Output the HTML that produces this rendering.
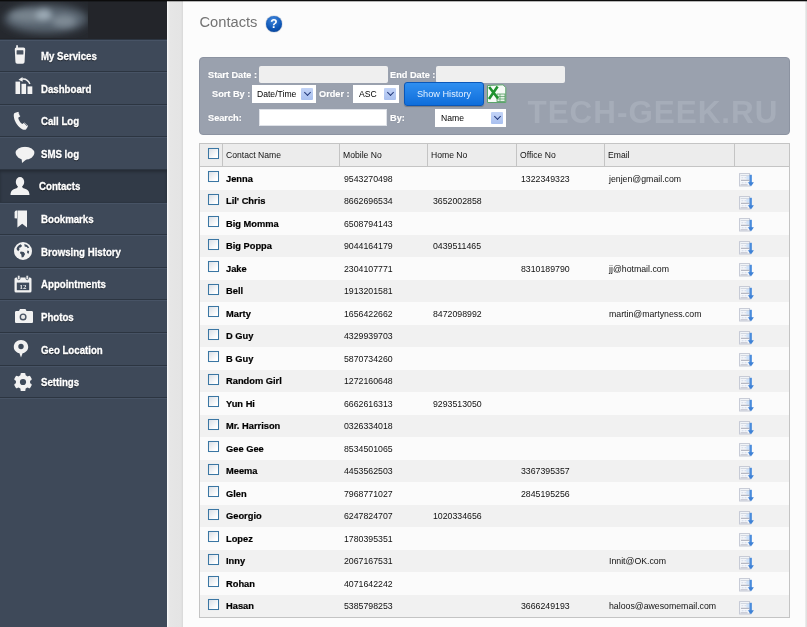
<!DOCTYPE html>
<html><head><meta charset="utf-8"><title>Contacts</title>
<style>
*{box-sizing:border-box;margin:0;padding:0}
html,body{width:807px;height:627px;overflow:hidden;background:#fcfcfc;font-family:"Liberation Sans",sans-serif;}
body{position:relative}
.abs{position:absolute}
#side{position:absolute;left:0;top:0;width:167px;height:627px;background:#3e4959;}
#logo{position:absolute;left:0;top:0;width:167px;height:39px;background:#23252a;}
#strip{position:absolute;left:167px;top:0;width:16px;height:627px;background:linear-gradient(to right,#ffffff 0,#f0f0f0 1px,#e6e6e6 3px,#e4e4e4 14px,#d8d8d8 16px);}
#topline{position:absolute;left:0;top:0;width:807px;height:2px;background:linear-gradient(#0c0c0c 0,#0c0c0c 1px,rgba(0,0,0,.28) 1px,rgba(0,0,0,.28) 2px);z-index:5}
.mi{position:absolute;left:0;width:167px;border-top:1px solid #2c3541;box-shadow:inset 0 1px 0 #475365;color:#fff;font-weight:bold;font-size:10.5px;}
.mi span{position:absolute;left:41px;top:calc(50% + .5px);transform:translateY(-50%) scaleX(.92);transform-origin:left center;white-space:nowrap;text-shadow:0 1px 1px rgba(0,0,0,.6);-webkit-text-stroke:.3px #fff}
.mi svg{position:absolute;top:50%;transform:translate(-50%,-50%)}
.mi.act{background:#313a47;box-shadow:inset 0 2px 3px rgba(0,0,0,.25)}
.mi.act span{left:39px;top:calc(50% - .5px)}
h1{position:absolute;left:199.5px;top:13.5px;font-size:14.7px;font-weight:normal;color:#737373;letter-spacing:0}
#help{position:absolute;left:266px;top:16px;width:16px;height:16px;border-radius:50%;background:radial-gradient(circle at 45% 25%,#3f86dc,#0d55b4 60%,#083b88);color:#fff;font-weight:bold;font-size:12px;text-align:center;line-height:16px;box-shadow:0 0 1px #052a66}
#panel{position:absolute;left:199px;top:57px;width:591px;height:78px;background:#9aa1ae;border-radius:4px;border:1px solid #8c93a1}
.lbl{position:absolute;color:#fff;font-weight:bold;font-size:9.2px;-webkit-text-stroke:.2px #fff;white-space:nowrap;text-shadow:0 0 1px rgba(90,98,112,.5)}
.inp{position:absolute;background:#efefef;border-radius:2px}
.inpw{position:absolute;background:#fff;border:1px solid #dfe2e8}
.sel{position:absolute;background:#fff;font-size:8.6px;color:#000;line-height:18px;padding-left:5px;white-space:nowrap}
.sel i{position:absolute;right:3px;top:3px;width:12px;height:12px;background:linear-gradient(#c3d4f7,#a9c0ef);border-radius:1px}
.sel i:after{content:"";position:absolute;left:3.5px;top:2px;width:5px;height:5px;border-right:1.8px solid #24397a;border-bottom:1.8px solid #24397a;transform:rotate(45deg);transform-origin:center;box-sizing:border-box}
#btn{position:absolute;left:404px;top:82px;width:80px;height:24px;border-radius:3px;background:linear-gradient(#2f8ff0,#0f6edb);border:1px solid #0a57b8;color:#e2f0ff;font-size:9.2px;text-align:center;line-height:22px;box-shadow:0 1px 1px rgba(0,0,0,.25)}
#wm{position:absolute;left:527.5px;top:93.5px;font-size:31.4px;font-weight:bold;color:#a6adb9;white-space:nowrap;line-height:38px;letter-spacing:1px}
#tbl{position:absolute;left:199px;top:143px;width:591px;height:475px;border:1px solid #c4c4c4;background:#fbfbfb}
#thead{position:absolute;left:0;top:0;width:589px;height:23px;background:#ececec;border-bottom:1px solid #c4c4c4}
.th{position:absolute;top:0;height:22px;line-height:22px;font-size:8.6px;color:#111;border-left:1px solid #c4c4c4;padding-left:3px;white-space:nowrap}
.tr{position:absolute;left:0;width:589px;}
.tr.alt{background:#f1f1f1}
.td{position:absolute;font-size:8.75px;color:#111;white-space:nowrap;top:calc(50% + .4px);transform:translateY(-50%)}
.td.b{font-weight:bold;font-size:9.3px;color:#000;-webkit-text-stroke:.2px #000}
.cb{position:absolute;left:8px;width:11px;height:11px;border:1px solid #3a76a3;background:linear-gradient(135deg,#d9dfe6,#ffffff 80%);box-shadow:0 0 .5px #3a76a3}
.ric{position:absolute;left:539px;top:calc(50% + 1.5px);transform:translateY(-50%);line-height:0}
#root{position:absolute;left:0;top:0;width:807px;height:627px;will-change:transform}
</style></head><body><div id="root">
<div id="side"></div>
<div id="logo"><svg width="167" height="39" style="position:absolute;left:0;top:0"><defs><filter id="bl" x="-30%" y="-80%" width="160%" height="260%"><feGaussianBlur stdDeviation="4.5"/></filter><filter id="bl2" x="-50%" y="-80%" width="200%" height="260%"><feGaussianBlur stdDeviation="3"/></filter><clipPath id="lc"><rect x="0" y="1" width="88" height="37"/></clipPath></defs><g clip-path="url(#lc)"><rect x="0" y="1" width="88" height="37" fill="#25282e"/><g filter="url(#bl)"><ellipse cx="46" cy="19" rx="42" ry="14" fill="#5a6672"/></g><g filter="url(#bl2)"><ellipse cx="30" cy="16" rx="20" ry="6" fill="#78848e"/><ellipse cx="44" cy="15" rx="8" ry="6" fill="#9dabb6"/><ellipse cx="64" cy="21" rx="12" ry="6" fill="#7f8b95"/></g></g></svg></div>
<div id="strip"></div>

<div class="mi" style="top:39px;height:32px"><span>My Services</span><svg style="left:20px;margin-top:-1px" width="12" height="20" viewBox="0 0 12 20"><path d="M2.2 0.3h1.7v3.4H2.2z" fill="#f2f2f2"/><path d="M2.6 2.6 H9.4 C10.6 2.6 11.3 3.4 11.2 4.6 L10.6 16.6 C10.5 18 9.8 18.8 8.6 18.8 H3.4 C2.2 18.8 1.5 18 1.4 16.6 L0.8 4.6 C0.7 3.4 1.4 2.6 2.6 2.6z" fill="#f2f2f2"/><rect x="2.6" y="5.2" width="6.8" height="4.4" rx="0.6" fill="#4a5462"/></svg></div>
<div class="mi" style="top:71px;height:33px"><span>Dashboard</span><svg style="left:23.5px;margin-top:-2px" width="19" height="18" viewBox="0 0 19 18"><rect x="1" y="4.6" width="4.6" height="12.4" fill="#f2f2f2"/><rect x="7" y="6.8" width="4.6" height="10.2" fill="#f2f2f2"/><rect x="13" y="9.4" width="4.8" height="7.6" fill="#f2f2f2"/><path d="M6.2 2.4 C10 1.2 13.6 3 15.4 7" stroke="#f2f2f2" stroke-width="1.5" fill="none"/><path d="M4 2.8 L8 0 L8.2 4.8z" fill="#f2f2f2"/></svg></div>
<div class="mi" style="top:104px;height:32px"><span>Call Log</span><svg style="left:21px;margin-top:0px" width="16" height="19" viewBox="0 0 16 19"><path d="M1.6 1.6 L5.4 0.2 L7.4 4.8 L5.2 6.2 C5.6 8.6 7.2 11.2 9.4 12.6 L11.4 11 L15.2 14.6 L13 18 C11.6 18.8 9.6 18.2 8 17 C4 14 1.2 9.4 0.8 4.8 C0.7 3.4 0.8 2.2 1.6 1.6z" fill="#f2f2f2"/><path d="M5.9 1.4 L7.6 5.2 M11.2 11.6 L14.4 14.8" stroke="#3f4b5b" stroke-width=".7"/></svg></div>
<div class="mi" style="top:136px;height:33px"><span>SMS log</span><svg style="left:24.5px;margin-top:2px" width="20" height="17" viewBox="0 0 20 17"><ellipse cx="10" cy="6.6" rx="9.4" ry="6.4" fill="#f2f2f2"/><path d="M6.6 11 L7 16.4 L12.4 12z" fill="#f2f2f2"/></svg></div>
<div class="mi act" style="top:169px;height:33px"><span>Contacts</span><svg style="left:20px;margin-top:0px" width="20" height="18" viewBox="0 0 20 18"><ellipse cx="10" cy="5" rx="4.2" ry="5" fill="#f2f2f2"/><path d="M0.5 18 C0.5 13.5 3 12.2 7.2 11 L8 9 H12 L12.8 11 C17 12.2 19.5 13.5 19.5 18z" fill="#f2f2f2"/></svg></div>
<div class="mi" style="top:202px;height:32px"><span>Bookmarks</span><svg style="left:21px;margin-top:0px" width="14" height="18" viewBox="0 0 14 18"><path d="M0.6 2.6 C0.6 1 1.6 0.4 3 0.4 V8.6 L0.6 8.2z" fill="#f2f2f2"/><path d="M3.4 0.4 H13 V17.4 L8.2 13.8 L3.4 17.4z" fill="#f2f2f2"/></svg></div>
<div class="mi" style="top:234px;height:33px"><span>Browsing History</span><svg style="left:23px;margin-top:0px" width="19" height="19" viewBox="0 0 19 19"><circle cx="9.5" cy="9.5" r="9" fill="#f2f2f2"/><path d="M3 7.5 C3.6 5 5.2 3.4 7.2 2.8 L8.6 4.4 L7 6 L5.6 6.2 L6 8.2 L4.6 9.8z" fill="#3f4b5b"/><path d="M10.8 2.6 L13.6 3.4 L15.8 6 L14.2 6.8 L13.4 5.4 L11.2 5z" fill="#3f4b5b"/><path d="M7.2 10 L10.2 10.4 L11.6 12.6 L10 15.6 L8.2 16 L7.8 13 L6.4 11.6z" fill="#3f4b5b"/><path d="M13.8 9 L15.6 9.6 L15.2 12.2 L13.6 11.4z" fill="#3f4b5b"/></svg></div>
<div class="mi" style="top:267px;height:32px"><span>Appointments</span><svg style="left:23px;margin-top:0px" width="18" height="18" viewBox="0 0 18 18"><rect x="0.5" y="2.5" width="17" height="15" rx="1.6" fill="#f2f2f2"/><rect x="3.6" y="0.3" width="2.4" height="4.4" rx="1" fill="#f2f2f2" stroke="#3f4b5b" stroke-width="0.8"/><rect x="12" y="0.3" width="2.4" height="4.4" rx="1" fill="#f2f2f2" stroke="#3f4b5b" stroke-width="0.8"/><rect x="2.8" y="7.6" width="12.4" height="7.6" fill="#3f4b5b"/><text x="9" y="14" font-family="Liberation Serif" font-size="6.8" font-weight="bold" fill="#f2f2f2" text-anchor="middle">12</text></svg></div>
<div class="mi" style="top:299px;height:33px"><span>Photos</span><svg style="left:23.5px;margin-top:0px" width="19" height="15" viewBox="0 0 19 15"><path d="M5.5 0.5 H11 L12 2.5 H17 C18 2.5 18.5 3 18.5 4 V13 C18.5 14 18 14.5 17 14.5 H2 C1 14.5 0.5 14 0.5 13 V4 C0.5 3 1 2.5 2 2.5 H4.5z" fill="#f2f2f2"/><circle cx="8.6" cy="8.4" r="3.5" fill="#4a5565"/><circle cx="8.6" cy="8.4" r="2.1" fill="#e9e9e9"/></svg></div>
<div class="mi" style="top:332px;height:33px"><span>Geo Location</span><svg style="left:21px;margin-top:0px" width="16" height="19" viewBox="0 0 16 19"><path d="M8 0.6 C3.8 0.6 0.8 3.6 0.8 7.4 C0.8 10.6 3.2 13 6.4 13.8 L8 18 L9.6 13.8 C12.8 13 15.2 10.6 15.2 7.4 C15.2 3.6 12.2 0.6 8 0.6z" fill="#f2f2f2"/><circle cx="8" cy="7" r="2.7" fill="#3f4b5b"/></svg></div>
<div class="mi" style="top:365px;height:32px"><span>Settings</span><svg style="left:23px;margin-top:0px" width="19" height="19" viewBox="0 0 19 19"><g fill="#f2f2f2"><circle cx="9.5" cy="9.5" r="7.2"/><rect x="7" y="0.4" width="5" height="18.2" rx="1.2"/><rect x="7" y="0.4" width="5" height="18.2" rx="1.2" transform="rotate(60 9.5 9.5)"/><rect x="7" y="0.4" width="5" height="18.2" rx="1.2" transform="rotate(120 9.5 9.5)"/></g><circle cx="9.5" cy="9.5" r="3.1" fill="#3f4b5b"/></svg></div>
<div class="mi" style="top:397px;height:230px"></div>
<div id="topline"></div>
<h1>Contacts</h1>
<div id="help">?</div>
<div id="panel"></div>
<div id="wm">TECH-GEEK.RU</div>
<div class="lbl" style="left:208px;top:70px">Start Date :</div>
<div class="inp" style="left:259px;top:66px;width:129px;height:17px"></div>
<div class="lbl" style="left:390px;top:70px">End Date :</div>
<div class="inp" style="left:436px;top:66px;width:129px;height:17px"></div>
<div class="lbl" style="left:212px;top:89px">Sort By :</div>
<div class="sel" style="left:252px;top:85px;width:64px;height:18px">Date/Time<i></i></div>
<div class="lbl" style="left:319px;top:89px">Order :</div>
<div class="sel" style="left:353px;top:85px;width:46px;height:18px;padding-left:6px">ASC<i></i></div>
<div id="btn">Show History</div>
<svg class="abs" style="left:486px;top:84px" width="21" height="20" viewBox="0 0 21 20"><path d="M1.5 1.5 L17 0.8 L19.8 3.5 V18.5 H1.5z" fill="#f6fbf6" stroke="#5aa46a" stroke-width="1"/><rect x="11" y="10" width="8" height="7.5" fill="#e8f4e8" stroke="#4f9a5e" stroke-width=".8"/><path d="M11 12.5h8M11 15h8M14 10v7.5" stroke="#4f9a5e" stroke-width=".7"/><path d="M3.2 3 L12 14.5 M11.6 2.6 L3 15" stroke="#1f922f" stroke-width="2.6"/></svg>
<div class="lbl" style="left:208px;top:113px">Search:</div>
<div class="inpw" style="left:259px;top:109px;width:128px;height:17px"></div>
<div class="lbl" style="left:390px;top:113px">By:</div>
<div class="sel" style="left:435px;top:109px;width:71px;height:18px;padding-left:6px">Name<i></i></div>
<div id="tbl"><div id="thead">
<div class="cb" style="top:4px"></div>
<div class="th" style="left:22px;width:117px">Contact Name</div>
<div class="th" style="left:139px;width:88px">Mobile No</div>
<div class="th" style="left:227px;width:89px">Home No</div>
<div class="th" style="left:316px;width:88px">Office No</div>
<div class="th" style="left:404px;width:130px">Email</div>
<div class="th" style="left:534px;width:55px"></div>
</div>

<div class="tr" style="top:23px;height:23px"><div class="cb" style="top:4px"></div><div class="td b" style="left:26px">Jenna</div><div class="td" style="left:144px">9543270498</div><div class="td" style="left:233px"></div><div class="td" style="left:321px">1322349323</div><div class="td" style="left:409px">jenjen@gmail.com</div><div class="ric"><svg width="17" height="14" viewBox="0 0 17 14"><rect x="0.6" y="0.6" width="10" height="12.4" fill="#f7f9fc" stroke="#c3c7d3" stroke-width="1"/><rect x="7.4" y="3" width="3" height="3.6" fill="#cfe2f8"/><path d="M1.6 2.6h8.4" stroke="#cdd3de" stroke-width="1"/><path d="M2 7.3h8" stroke="#a9adba" stroke-width="1.1"/><path d="M2.4 4.8h5M2.6 9.8h6.4" stroke="#c9d3e2" stroke-width="0.9" stroke-dasharray="2 1"/><path d="M1.6 11.8h7" stroke="#b9bdc9" stroke-width="1"/><path d="M11.7 1.8 V10" stroke="#4a8cdc" stroke-width="2.3"/><path d="M8.9 9.2 H14.9 L11.9 13.4z" fill="#3f82d6"/></svg></div></div>
<div class="tr alt" style="top:46px;height:22px"><div class="cb" style="top:4px"></div><div class="td b" style="left:26px">Lil' Chris</div><div class="td" style="left:144px">8662696534</div><div class="td" style="left:233px">3652002858</div><div class="td" style="left:321px"></div><div class="td" style="left:409px"></div><div class="ric"><svg width="17" height="14" viewBox="0 0 17 14"><rect x="0.6" y="0.6" width="10" height="12.4" fill="#f7f9fc" stroke="#c3c7d3" stroke-width="1"/><rect x="7.4" y="3" width="3" height="3.6" fill="#cfe2f8"/><path d="M1.6 2.6h8.4" stroke="#cdd3de" stroke-width="1"/><path d="M2 7.3h8" stroke="#a9adba" stroke-width="1.1"/><path d="M2.4 4.8h5M2.6 9.8h6.4" stroke="#c9d3e2" stroke-width="0.9" stroke-dasharray="2 1"/><path d="M1.6 11.8h7" stroke="#b9bdc9" stroke-width="1"/><path d="M11.7 1.8 V10" stroke="#4a8cdc" stroke-width="2.3"/><path d="M8.9 9.2 H14.9 L11.9 13.4z" fill="#3f82d6"/></svg></div></div>
<div class="tr" style="top:68px;height:23px"><div class="cb" style="top:4px"></div><div class="td b" style="left:26px">Big Momma</div><div class="td" style="left:144px">6508794143</div><div class="td" style="left:233px"></div><div class="td" style="left:321px"></div><div class="td" style="left:409px"></div><div class="ric"><svg width="17" height="14" viewBox="0 0 17 14"><rect x="0.6" y="0.6" width="10" height="12.4" fill="#f7f9fc" stroke="#c3c7d3" stroke-width="1"/><rect x="7.4" y="3" width="3" height="3.6" fill="#cfe2f8"/><path d="M1.6 2.6h8.4" stroke="#cdd3de" stroke-width="1"/><path d="M2 7.3h8" stroke="#a9adba" stroke-width="1.1"/><path d="M2.4 4.8h5M2.6 9.8h6.4" stroke="#c9d3e2" stroke-width="0.9" stroke-dasharray="2 1"/><path d="M1.6 11.8h7" stroke="#b9bdc9" stroke-width="1"/><path d="M11.7 1.8 V10" stroke="#4a8cdc" stroke-width="2.3"/><path d="M8.9 9.2 H14.9 L11.9 13.4z" fill="#3f82d6"/></svg></div></div>
<div class="tr alt" style="top:91px;height:22px"><div class="cb" style="top:4px"></div><div class="td b" style="left:26px">Big Poppa</div><div class="td" style="left:144px">9044164179</div><div class="td" style="left:233px">0439511465</div><div class="td" style="left:321px"></div><div class="td" style="left:409px"></div><div class="ric"><svg width="17" height="14" viewBox="0 0 17 14"><rect x="0.6" y="0.6" width="10" height="12.4" fill="#f7f9fc" stroke="#c3c7d3" stroke-width="1"/><rect x="7.4" y="3" width="3" height="3.6" fill="#cfe2f8"/><path d="M1.6 2.6h8.4" stroke="#cdd3de" stroke-width="1"/><path d="M2 7.3h8" stroke="#a9adba" stroke-width="1.1"/><path d="M2.4 4.8h5M2.6 9.8h6.4" stroke="#c9d3e2" stroke-width="0.9" stroke-dasharray="2 1"/><path d="M1.6 11.8h7" stroke="#b9bdc9" stroke-width="1"/><path d="M11.7 1.8 V10" stroke="#4a8cdc" stroke-width="2.3"/><path d="M8.9 9.2 H14.9 L11.9 13.4z" fill="#3f82d6"/></svg></div></div>
<div class="tr" style="top:113px;height:23px"><div class="cb" style="top:4px"></div><div class="td b" style="left:26px">Jake</div><div class="td" style="left:144px">2304107771</div><div class="td" style="left:233px"></div><div class="td" style="left:321px">8310189790</div><div class="td" style="left:409px">jj@hotmail.com</div><div class="ric"><svg width="17" height="14" viewBox="0 0 17 14"><rect x="0.6" y="0.6" width="10" height="12.4" fill="#f7f9fc" stroke="#c3c7d3" stroke-width="1"/><rect x="7.4" y="3" width="3" height="3.6" fill="#cfe2f8"/><path d="M1.6 2.6h8.4" stroke="#cdd3de" stroke-width="1"/><path d="M2 7.3h8" stroke="#a9adba" stroke-width="1.1"/><path d="M2.4 4.8h5M2.6 9.8h6.4" stroke="#c9d3e2" stroke-width="0.9" stroke-dasharray="2 1"/><path d="M1.6 11.8h7" stroke="#b9bdc9" stroke-width="1"/><path d="M11.7 1.8 V10" stroke="#4a8cdc" stroke-width="2.3"/><path d="M8.9 9.2 H14.9 L11.9 13.4z" fill="#3f82d6"/></svg></div></div>
<div class="tr alt" style="top:136px;height:22px"><div class="cb" style="top:4px"></div><div class="td b" style="left:26px">Bell</div><div class="td" style="left:144px">1913201581</div><div class="td" style="left:233px"></div><div class="td" style="left:321px"></div><div class="td" style="left:409px"></div><div class="ric"><svg width="17" height="14" viewBox="0 0 17 14"><rect x="0.6" y="0.6" width="10" height="12.4" fill="#f7f9fc" stroke="#c3c7d3" stroke-width="1"/><rect x="7.4" y="3" width="3" height="3.6" fill="#cfe2f8"/><path d="M1.6 2.6h8.4" stroke="#cdd3de" stroke-width="1"/><path d="M2 7.3h8" stroke="#a9adba" stroke-width="1.1"/><path d="M2.4 4.8h5M2.6 9.8h6.4" stroke="#c9d3e2" stroke-width="0.9" stroke-dasharray="2 1"/><path d="M1.6 11.8h7" stroke="#b9bdc9" stroke-width="1"/><path d="M11.7 1.8 V10" stroke="#4a8cdc" stroke-width="2.3"/><path d="M8.9 9.2 H14.9 L11.9 13.4z" fill="#3f82d6"/></svg></div></div>
<div class="tr" style="top:158px;height:23px"><div class="cb" style="top:4px"></div><div class="td b" style="left:26px">Marty</div><div class="td" style="left:144px">1656422662</div><div class="td" style="left:233px">8472098992</div><div class="td" style="left:321px"></div><div class="td" style="left:409px">martin@martyness.com</div><div class="ric"><svg width="17" height="14" viewBox="0 0 17 14"><rect x="0.6" y="0.6" width="10" height="12.4" fill="#f7f9fc" stroke="#c3c7d3" stroke-width="1"/><rect x="7.4" y="3" width="3" height="3.6" fill="#cfe2f8"/><path d="M1.6 2.6h8.4" stroke="#cdd3de" stroke-width="1"/><path d="M2 7.3h8" stroke="#a9adba" stroke-width="1.1"/><path d="M2.4 4.8h5M2.6 9.8h6.4" stroke="#c9d3e2" stroke-width="0.9" stroke-dasharray="2 1"/><path d="M1.6 11.8h7" stroke="#b9bdc9" stroke-width="1"/><path d="M11.7 1.8 V10" stroke="#4a8cdc" stroke-width="2.3"/><path d="M8.9 9.2 H14.9 L11.9 13.4z" fill="#3f82d6"/></svg></div></div>
<div class="tr alt" style="top:181px;height:22px"><div class="cb" style="top:4px"></div><div class="td b" style="left:26px">D Guy</div><div class="td" style="left:144px">4329939703</div><div class="td" style="left:233px"></div><div class="td" style="left:321px"></div><div class="td" style="left:409px"></div><div class="ric"><svg width="17" height="14" viewBox="0 0 17 14"><rect x="0.6" y="0.6" width="10" height="12.4" fill="#f7f9fc" stroke="#c3c7d3" stroke-width="1"/><rect x="7.4" y="3" width="3" height="3.6" fill="#cfe2f8"/><path d="M1.6 2.6h8.4" stroke="#cdd3de" stroke-width="1"/><path d="M2 7.3h8" stroke="#a9adba" stroke-width="1.1"/><path d="M2.4 4.8h5M2.6 9.8h6.4" stroke="#c9d3e2" stroke-width="0.9" stroke-dasharray="2 1"/><path d="M1.6 11.8h7" stroke="#b9bdc9" stroke-width="1"/><path d="M11.7 1.8 V10" stroke="#4a8cdc" stroke-width="2.3"/><path d="M8.9 9.2 H14.9 L11.9 13.4z" fill="#3f82d6"/></svg></div></div>
<div class="tr" style="top:203px;height:23px"><div class="cb" style="top:4px"></div><div class="td b" style="left:26px">B Guy</div><div class="td" style="left:144px">5870734260</div><div class="td" style="left:233px"></div><div class="td" style="left:321px"></div><div class="td" style="left:409px"></div><div class="ric"><svg width="17" height="14" viewBox="0 0 17 14"><rect x="0.6" y="0.6" width="10" height="12.4" fill="#f7f9fc" stroke="#c3c7d3" stroke-width="1"/><rect x="7.4" y="3" width="3" height="3.6" fill="#cfe2f8"/><path d="M1.6 2.6h8.4" stroke="#cdd3de" stroke-width="1"/><path d="M2 7.3h8" stroke="#a9adba" stroke-width="1.1"/><path d="M2.4 4.8h5M2.6 9.8h6.4" stroke="#c9d3e2" stroke-width="0.9" stroke-dasharray="2 1"/><path d="M1.6 11.8h7" stroke="#b9bdc9" stroke-width="1"/><path d="M11.7 1.8 V10" stroke="#4a8cdc" stroke-width="2.3"/><path d="M8.9 9.2 H14.9 L11.9 13.4z" fill="#3f82d6"/></svg></div></div>
<div class="tr alt" style="top:226px;height:22px"><div class="cb" style="top:4px"></div><div class="td b" style="left:26px">Random Girl</div><div class="td" style="left:144px">1272160648</div><div class="td" style="left:233px"></div><div class="td" style="left:321px"></div><div class="td" style="left:409px"></div><div class="ric"><svg width="17" height="14" viewBox="0 0 17 14"><rect x="0.6" y="0.6" width="10" height="12.4" fill="#f7f9fc" stroke="#c3c7d3" stroke-width="1"/><rect x="7.4" y="3" width="3" height="3.6" fill="#cfe2f8"/><path d="M1.6 2.6h8.4" stroke="#cdd3de" stroke-width="1"/><path d="M2 7.3h8" stroke="#a9adba" stroke-width="1.1"/><path d="M2.4 4.8h5M2.6 9.8h6.4" stroke="#c9d3e2" stroke-width="0.9" stroke-dasharray="2 1"/><path d="M1.6 11.8h7" stroke="#b9bdc9" stroke-width="1"/><path d="M11.7 1.8 V10" stroke="#4a8cdc" stroke-width="2.3"/><path d="M8.9 9.2 H14.9 L11.9 13.4z" fill="#3f82d6"/></svg></div></div>
<div class="tr" style="top:248px;height:23px"><div class="cb" style="top:4px"></div><div class="td b" style="left:26px">Yun Hi</div><div class="td" style="left:144px">6662616313</div><div class="td" style="left:233px">9293513050</div><div class="td" style="left:321px"></div><div class="td" style="left:409px"></div><div class="ric"><svg width="17" height="14" viewBox="0 0 17 14"><rect x="0.6" y="0.6" width="10" height="12.4" fill="#f7f9fc" stroke="#c3c7d3" stroke-width="1"/><rect x="7.4" y="3" width="3" height="3.6" fill="#cfe2f8"/><path d="M1.6 2.6h8.4" stroke="#cdd3de" stroke-width="1"/><path d="M2 7.3h8" stroke="#a9adba" stroke-width="1.1"/><path d="M2.4 4.8h5M2.6 9.8h6.4" stroke="#c9d3e2" stroke-width="0.9" stroke-dasharray="2 1"/><path d="M1.6 11.8h7" stroke="#b9bdc9" stroke-width="1"/><path d="M11.7 1.8 V10" stroke="#4a8cdc" stroke-width="2.3"/><path d="M8.9 9.2 H14.9 L11.9 13.4z" fill="#3f82d6"/></svg></div></div>
<div class="tr alt" style="top:271px;height:22px"><div class="cb" style="top:4px"></div><div class="td b" style="left:26px">Mr. Harrison</div><div class="td" style="left:144px">0326334018</div><div class="td" style="left:233px"></div><div class="td" style="left:321px"></div><div class="td" style="left:409px"></div><div class="ric"><svg width="17" height="14" viewBox="0 0 17 14"><rect x="0.6" y="0.6" width="10" height="12.4" fill="#f7f9fc" stroke="#c3c7d3" stroke-width="1"/><rect x="7.4" y="3" width="3" height="3.6" fill="#cfe2f8"/><path d="M1.6 2.6h8.4" stroke="#cdd3de" stroke-width="1"/><path d="M2 7.3h8" stroke="#a9adba" stroke-width="1.1"/><path d="M2.4 4.8h5M2.6 9.8h6.4" stroke="#c9d3e2" stroke-width="0.9" stroke-dasharray="2 1"/><path d="M1.6 11.8h7" stroke="#b9bdc9" stroke-width="1"/><path d="M11.7 1.8 V10" stroke="#4a8cdc" stroke-width="2.3"/><path d="M8.9 9.2 H14.9 L11.9 13.4z" fill="#3f82d6"/></svg></div></div>
<div class="tr" style="top:293px;height:23px"><div class="cb" style="top:4px"></div><div class="td b" style="left:26px">Gee Gee</div><div class="td" style="left:144px">8534501065</div><div class="td" style="left:233px"></div><div class="td" style="left:321px"></div><div class="td" style="left:409px"></div><div class="ric"><svg width="17" height="14" viewBox="0 0 17 14"><rect x="0.6" y="0.6" width="10" height="12.4" fill="#f7f9fc" stroke="#c3c7d3" stroke-width="1"/><rect x="7.4" y="3" width="3" height="3.6" fill="#cfe2f8"/><path d="M1.6 2.6h8.4" stroke="#cdd3de" stroke-width="1"/><path d="M2 7.3h8" stroke="#a9adba" stroke-width="1.1"/><path d="M2.4 4.8h5M2.6 9.8h6.4" stroke="#c9d3e2" stroke-width="0.9" stroke-dasharray="2 1"/><path d="M1.6 11.8h7" stroke="#b9bdc9" stroke-width="1"/><path d="M11.7 1.8 V10" stroke="#4a8cdc" stroke-width="2.3"/><path d="M8.9 9.2 H14.9 L11.9 13.4z" fill="#3f82d6"/></svg></div></div>
<div class="tr alt" style="top:316px;height:22px"><div class="cb" style="top:4px"></div><div class="td b" style="left:26px">Meema</div><div class="td" style="left:144px">4453562503</div><div class="td" style="left:233px"></div><div class="td" style="left:321px">3367395357</div><div class="td" style="left:409px"></div><div class="ric"><svg width="17" height="14" viewBox="0 0 17 14"><rect x="0.6" y="0.6" width="10" height="12.4" fill="#f7f9fc" stroke="#c3c7d3" stroke-width="1"/><rect x="7.4" y="3" width="3" height="3.6" fill="#cfe2f8"/><path d="M1.6 2.6h8.4" stroke="#cdd3de" stroke-width="1"/><path d="M2 7.3h8" stroke="#a9adba" stroke-width="1.1"/><path d="M2.4 4.8h5M2.6 9.8h6.4" stroke="#c9d3e2" stroke-width="0.9" stroke-dasharray="2 1"/><path d="M1.6 11.8h7" stroke="#b9bdc9" stroke-width="1"/><path d="M11.7 1.8 V10" stroke="#4a8cdc" stroke-width="2.3"/><path d="M8.9 9.2 H14.9 L11.9 13.4z" fill="#3f82d6"/></svg></div></div>
<div class="tr" style="top:338px;height:23px"><div class="cb" style="top:4px"></div><div class="td b" style="left:26px">Glen</div><div class="td" style="left:144px">7968771027</div><div class="td" style="left:233px"></div><div class="td" style="left:321px">2845195256</div><div class="td" style="left:409px"></div><div class="ric"><svg width="17" height="14" viewBox="0 0 17 14"><rect x="0.6" y="0.6" width="10" height="12.4" fill="#f7f9fc" stroke="#c3c7d3" stroke-width="1"/><rect x="7.4" y="3" width="3" height="3.6" fill="#cfe2f8"/><path d="M1.6 2.6h8.4" stroke="#cdd3de" stroke-width="1"/><path d="M2 7.3h8" stroke="#a9adba" stroke-width="1.1"/><path d="M2.4 4.8h5M2.6 9.8h6.4" stroke="#c9d3e2" stroke-width="0.9" stroke-dasharray="2 1"/><path d="M1.6 11.8h7" stroke="#b9bdc9" stroke-width="1"/><path d="M11.7 1.8 V10" stroke="#4a8cdc" stroke-width="2.3"/><path d="M8.9 9.2 H14.9 L11.9 13.4z" fill="#3f82d6"/></svg></div></div>
<div class="tr alt" style="top:361px;height:22px"><div class="cb" style="top:4px"></div><div class="td b" style="left:26px">Georgio</div><div class="td" style="left:144px">6247824707</div><div class="td" style="left:233px">1020334656</div><div class="td" style="left:321px"></div><div class="td" style="left:409px"></div><div class="ric"><svg width="17" height="14" viewBox="0 0 17 14"><rect x="0.6" y="0.6" width="10" height="12.4" fill="#f7f9fc" stroke="#c3c7d3" stroke-width="1"/><rect x="7.4" y="3" width="3" height="3.6" fill="#cfe2f8"/><path d="M1.6 2.6h8.4" stroke="#cdd3de" stroke-width="1"/><path d="M2 7.3h8" stroke="#a9adba" stroke-width="1.1"/><path d="M2.4 4.8h5M2.6 9.8h6.4" stroke="#c9d3e2" stroke-width="0.9" stroke-dasharray="2 1"/><path d="M1.6 11.8h7" stroke="#b9bdc9" stroke-width="1"/><path d="M11.7 1.8 V10" stroke="#4a8cdc" stroke-width="2.3"/><path d="M8.9 9.2 H14.9 L11.9 13.4z" fill="#3f82d6"/></svg></div></div>
<div class="tr" style="top:383px;height:23px"><div class="cb" style="top:4px"></div><div class="td b" style="left:26px">Lopez</div><div class="td" style="left:144px">1780395351</div><div class="td" style="left:233px"></div><div class="td" style="left:321px"></div><div class="td" style="left:409px"></div><div class="ric"><svg width="17" height="14" viewBox="0 0 17 14"><rect x="0.6" y="0.6" width="10" height="12.4" fill="#f7f9fc" stroke="#c3c7d3" stroke-width="1"/><rect x="7.4" y="3" width="3" height="3.6" fill="#cfe2f8"/><path d="M1.6 2.6h8.4" stroke="#cdd3de" stroke-width="1"/><path d="M2 7.3h8" stroke="#a9adba" stroke-width="1.1"/><path d="M2.4 4.8h5M2.6 9.8h6.4" stroke="#c9d3e2" stroke-width="0.9" stroke-dasharray="2 1"/><path d="M1.6 11.8h7" stroke="#b9bdc9" stroke-width="1"/><path d="M11.7 1.8 V10" stroke="#4a8cdc" stroke-width="2.3"/><path d="M8.9 9.2 H14.9 L11.9 13.4z" fill="#3f82d6"/></svg></div></div>
<div class="tr alt" style="top:406px;height:22px"><div class="cb" style="top:4px"></div><div class="td b" style="left:26px">Inny</div><div class="td" style="left:144px">2067167531</div><div class="td" style="left:233px"></div><div class="td" style="left:321px"></div><div class="td" style="left:409px">Innit@OK.com</div><div class="ric"><svg width="17" height="14" viewBox="0 0 17 14"><rect x="0.6" y="0.6" width="10" height="12.4" fill="#f7f9fc" stroke="#c3c7d3" stroke-width="1"/><rect x="7.4" y="3" width="3" height="3.6" fill="#cfe2f8"/><path d="M1.6 2.6h8.4" stroke="#cdd3de" stroke-width="1"/><path d="M2 7.3h8" stroke="#a9adba" stroke-width="1.1"/><path d="M2.4 4.8h5M2.6 9.8h6.4" stroke="#c9d3e2" stroke-width="0.9" stroke-dasharray="2 1"/><path d="M1.6 11.8h7" stroke="#b9bdc9" stroke-width="1"/><path d="M11.7 1.8 V10" stroke="#4a8cdc" stroke-width="2.3"/><path d="M8.9 9.2 H14.9 L11.9 13.4z" fill="#3f82d6"/></svg></div></div>
<div class="tr" style="top:428px;height:23px"><div class="cb" style="top:4px"></div><div class="td b" style="left:26px">Rohan</div><div class="td" style="left:144px">4071642242</div><div class="td" style="left:233px"></div><div class="td" style="left:321px"></div><div class="td" style="left:409px"></div><div class="ric"><svg width="17" height="14" viewBox="0 0 17 14"><rect x="0.6" y="0.6" width="10" height="12.4" fill="#f7f9fc" stroke="#c3c7d3" stroke-width="1"/><rect x="7.4" y="3" width="3" height="3.6" fill="#cfe2f8"/><path d="M1.6 2.6h8.4" stroke="#cdd3de" stroke-width="1"/><path d="M2 7.3h8" stroke="#a9adba" stroke-width="1.1"/><path d="M2.4 4.8h5M2.6 9.8h6.4" stroke="#c9d3e2" stroke-width="0.9" stroke-dasharray="2 1"/><path d="M1.6 11.8h7" stroke="#b9bdc9" stroke-width="1"/><path d="M11.7 1.8 V10" stroke="#4a8cdc" stroke-width="2.3"/><path d="M8.9 9.2 H14.9 L11.9 13.4z" fill="#3f82d6"/></svg></div></div>
<div class="tr alt" style="top:451px;height:22px"><div class="cb" style="top:4px"></div><div class="td b" style="left:26px">Hasan</div><div class="td" style="left:144px">5385798253</div><div class="td" style="left:233px"></div><div class="td" style="left:321px">3666249193</div><div class="td" style="left:409px">haloos@awesomemail.com</div><div class="ric"><svg width="17" height="14" viewBox="0 0 17 14"><rect x="0.6" y="0.6" width="10" height="12.4" fill="#f7f9fc" stroke="#c3c7d3" stroke-width="1"/><rect x="7.4" y="3" width="3" height="3.6" fill="#cfe2f8"/><path d="M1.6 2.6h8.4" stroke="#cdd3de" stroke-width="1"/><path d="M2 7.3h8" stroke="#a9adba" stroke-width="1.1"/><path d="M2.4 4.8h5M2.6 9.8h6.4" stroke="#c9d3e2" stroke-width="0.9" stroke-dasharray="2 1"/><path d="M1.6 11.8h7" stroke="#b9bdc9" stroke-width="1"/><path d="M11.7 1.8 V10" stroke="#4a8cdc" stroke-width="2.3"/><path d="M8.9 9.2 H14.9 L11.9 13.4z" fill="#3f82d6"/></svg></div></div>
</div>
<div class="abs" style="left:805px;top:1px;width:2px;height:626px;background:linear-gradient(to right,#efefef,#dcdcdc)"></div>
</div></body></html>
